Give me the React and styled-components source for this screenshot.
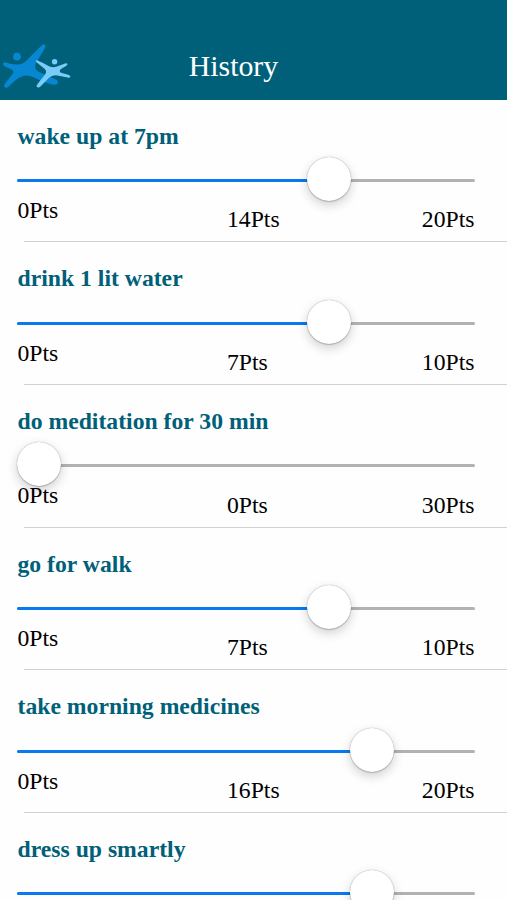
import React from 'react';
import styled, { createGlobalStyle } from 'styled-components';

const GlobalStyle = createGlobalStyle`
  * { box-sizing: border-box; }
  html, body { margin: 0; padding: 0; background: #fff; }
  body { font-family: "Liberation Serif", "Times New Roman", serif; }
`;

const Screen = styled.div`
  width: 507px;
  height: 900px;
  overflow: hidden;
  display: flex;
  flex-direction: column;
  background: #fefefe;
`;

const Header = styled.header`
  flex: none;
  height: 99.5px;
  padding-top: 40px;
  display: grid;
  grid-template-columns: 80px 307px 80px;
  background: #005f79;
`;

const Logo = styled.svg`
  display: block;
  width: 80px;
  height: 59px;
`;

const Title = styled.h1`
  margin: 0;
  padding-top: 9px;
  font-size: 29.8px;
  line-height: 34px;
  font-weight: 400;
  text-align: center;
  color: #fff;
`;

const List = styled.ul`
  margin: 0;
  padding: 0;
  list-style: none;
`;

const Item = styled.li`
  height: 142.7px;
  display: flex;
  flex-direction: column;
`;

const Name = styled.h2`
  flex: none;
  margin: 0;
  padding: 22px 0 0 17.5px;
  height: 57px;
  font-size: 23.7px;
  line-height: 28px;
  font-weight: 700;
  color: #005f79;
`;

const Slider = styled.div`
  flex: none;
  height: 45px;
  margin: 0 32px 0 17px;
  display: grid;
  align-items: center;
`;

const Track = styled.div`
  grid-area: 1 / 1;
  height: 3px;
  margin-top: 3px;
  border-radius: 2px;
  background: #b2b2b2;
  overflow: hidden;
`;

const Fill = styled.div`
  height: 100%;
  background: #0879ef;
`;

const Knob = styled.div`
  grid-area: 1 / 1;
  width: 44px;
  height: 44px;
  border-radius: 50%;
  background: #fff;
  box-shadow: 0 0 1px rgba(0, 0, 0, 0.45), 0 1px 1px rgba(0, 0, 0, 0.16),
    0 4px 11px rgba(0, 0, 0, 0.19);
`;

const Points = styled.div`
  flex: 1;
  display: grid;
  grid-template-columns: 209.5px 1fr auto;
  margin: 0 32.5px 0 17.5px;
  font-size: 23.7px;
  line-height: 28px;
  color: #000;
`;

const Minimum = styled.span`
  margin-top: -5.6px;
  z-index: 1;
`;

const Value = styled.span`
  margin-top: 3.8px;
`;

const Divider = styled.div`
  flex: none;
  height: 1px;
  margin-left: 24px;
  background: #d2d2d2;
`;

const habits = [
  { name: 'wake up at 7pm', value: 14, max: 20, position: 0.7 },
  { name: 'drink 1 lit water', value: 7, max: 10, position: 0.7 },
  { name: 'do meditation for 30 min', value: 0, max: 30, position: 0 },
  { name: 'go for walk', value: 7, max: 10, position: 0.7 },
  { name: 'take morning medicines', value: 16, max: 20, position: 0.804 },
  { name: 'dress up smartly', position: 0.804 },
];

function Habit({ name, value, max, position }) {
  const offset = position * 414;
  return (
    <Item>
      <Name>{name}</Name>
      <Slider>
        <Track><Fill style={{ width: `${offset ? offset + 22 : 0}px` }} /></Track>
        <Knob style={{ marginLeft: `${offset}px` }} />
      </Slider>
      {max && (
        <>
          <Points>
            <Minimum>0Pts</Minimum>
            <Value>{value}Pts</Value>
            <Value>{max}Pts</Value>
          </Points>
          <Divider />
        </>
      )}
    </Item>
  );
}

export default function App() {
  return (
    <Screen>
      <GlobalStyle />
      <Header>
        <Logo viewBox="0 40 80 59" aria-hidden="true">
          <g fill="#0786d1">
            <circle cx="17" cy="56.6" r="3.9" />
            <path d="M5 62.3 Q11 64.5 17 64.5 Q22 64.5 26 61 L41.5 45.5 Q43.5 43.5 45.2 45 Q46 46 45 48 L36 63 Q33.5 68 38 71.5 L56 79.5 Q59 81.5 57.3 83.7 Q56 85 52 84.5 Q44 83 36 78.5 Q29 74.5 24 75.7 Q19 77 14.5 81 L8.5 86.8 Q5.5 89 4.2 86.5 Q3.8 85.5 5 83.5 L12.5 74 Q14.5 71 12 69.7 L4.5 66.3 Q2.5 65 3 63.5 Q3.5 62 5 62.3 Z" />
          </g>
          <g fill="#79ccf9">
            <circle cx="54.6" cy="61.8" r="2.7" />
            <path d="M37.5 60.4 Q44 63 49 66.2 Q53 68 57 66.5 L65 63.5 Q67.2 63 67.5 64.2 Q67.6 65 66 66 L61 69 Q58.5 71 61 72.8 L69 75 Q71.2 76.2 70.2 77.3 Q69.5 78 67.5 77.6 L57.5 75.4 Q52.5 74.3 49 77.7 L41 86 Q38.5 88.3 36.9 87.1 Q36 86.2 37.5 84.1 L45 74.5 Q47.3 71.5 44.8 69 L36.5 62.3 Q35.4 61 36 60.4 Q36.6 60 37.5 60.4 Z" />
          </g>
        </Logo>
        <Title>History</Title>
      </Header>
      <List>
        {habits.map((habit) => <Habit key={habit.name} {...habit} />)}
      </List>
    </Screen>
  );
}
